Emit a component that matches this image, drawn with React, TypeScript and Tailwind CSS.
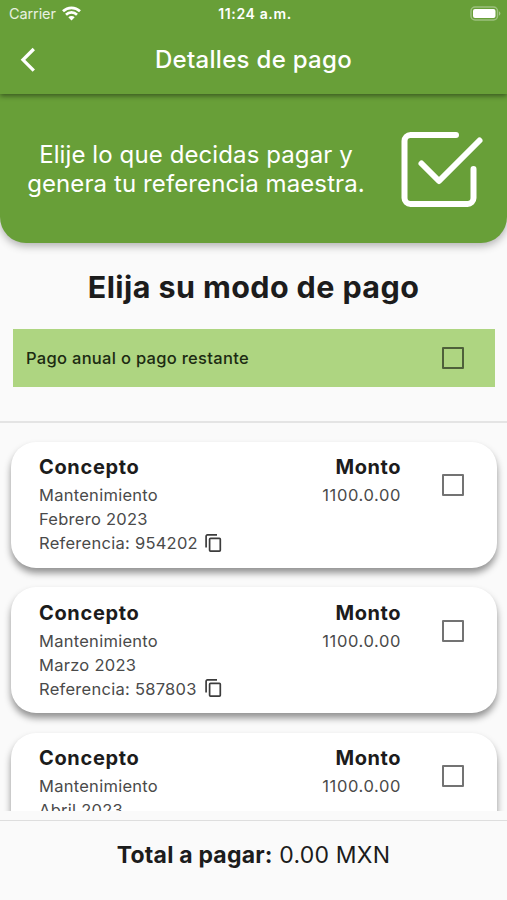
type Payment = {
  month: string;
  reference?: string;
  amount: string;
};

const payments: Payment[] = [
  { month: 'Febrero 2023', reference: '954202', amount: '1100.0.00' },
  { month: 'Marzo 2023', reference: '587803', amount: '1100.0.00' },
  { month: 'Abril 2023', amount: '1100.0.00' },
];

function StatusBar() {
  return (
    <div className="grid h-[27px] grid-cols-3 items-center pl-[9px] pr-[6px] text-[14.5px] leading-none text-white/85">
      <div className="flex items-center gap-[6px]">
        <span className="pt-px tracking-[-0.1px]">Carrier</span>
        <svg width="19" height="15" viewBox="0 0 19 15" fill="none" stroke="white" strokeWidth="2.7" aria-hidden>
          <path d="M1 5.3a12.2 12.2 0 0 1 17 0" />
          <path d="M4 8.7a7.9 7.9 0 0 1 11 0" />
          <path d="M9.5 14.5 6.3 11.3a4.5 4.5 0 0 1 6.4 0Z" fill="white" stroke="none" />
        </svg>
      </div>
      <span className="whitespace-nowrap pt-px text-center text-[14px] font-semibold tracking-[0.65px] text-white">
        11:24 a.m.
      </span>
      <svg className="ml-auto" width="31" height="15" viewBox="0 0 31 15" fill="none" aria-hidden>
        <rect x="1" y="1" width="26.5" height="13" rx="4" stroke="white" strokeOpacity="0.35" strokeWidth="1.5" />
        <rect x="3" y="3" width="22.5" height="9" rx="2" fill="white" />
        <path d="M29 5.2a2.6 2.6 0 0 1 0 4.6Z" fill="white" fillOpacity="0.4" />
      </svg>
    </div>
  );
}

function AppBar() {
  return (
    <header className="relative z-20 h-[94px] shrink-0 bg-[#689f38] shadow-[0_2px_5px_rgba(0,0,0,0.45)]">
      <StatusBar />
      <div className="grid h-[66px] grid-cols-[56px_1fr_56px] items-center">
        <svg className="ml-[19px]" width="18" height="26" viewBox="0 0 18 26" fill="none" stroke="white" strokeWidth="3.3" aria-hidden>
          <path d="M14.8 2 4 12.8l10.800 10.800" />
        </svg>
        <h1 className="text-center text-[24px] font-medium tracking-[0.3px] text-white">Detalles de pago</h1>
      </div>
    </header>
  );
}

function Banner() {
  return (
    <section className="relative z-10 flex h-[149px] shrink-0 items-center rounded-b-[26px] bg-[#689f38] pl-[20px] shadow-[0_3px_8px_rgba(0,0,0,0.3)]">
      <p className="w-[352px] pt-px text-center text-[24px] leading-[29.5px] tracking-[0.1px] text-white">
        Elije lo que decidas pagar y<br />
        genera tu referencia maestra.
      </p>
      <svg
        className="ml-[28px]"
        width="84"
        height="78"
        viewBox="0 0 84 78"
        fill="none"
        stroke="white"
        strokeWidth="6"
        strokeLinecap="round"
        strokeLinejoin="round"
        aria-hidden
      >
        <path d="M56 5H10.500a6 6 0 0 0-6 6V68a6 6 0 0 0 6 6h57a6 6 0 0 0 6-6V39" />
        <path d="M21.500 33.500 39 51 79.500 10.500" />
      </svg>
    </section>
  );
}

function Checkbox({ label, className = '' }: { label: string; className?: string }) {
  return (
    <span
      role="checkbox"
      aria-checked="false"
      aria-label={label}
      className={`block size-[22px] shrink-0 rounded-[1px] border-2 border-black/55 ${className}`}
    />
  );
}

function CopyIcon() {
  return (
    <svg width="17" height="19" viewBox="0 0 17 19" fill="none" stroke="#3c3c3c" strokeWidth="1.7" aria-hidden>
      <path d="M1.1 13.5V2.200a1.300 1.300 0 0 1 1.300-1.300H12" />
      <rect x="4.600" y="4.400" width="10.700" height="12.800" rx="0.900" />
    </svg>
  );
}

function PaymentCard({ month, reference, amount }: Payment) {
  return (
    <li className="flex h-[126px] shrink-0 rounded-[25px] bg-white pl-[28.5px] pr-[32.5px] pt-[12.5px] shadow-[0_5px_7px_rgba(0,0,0,0.42)]">
      <div className="flex-1 text-[16.5px] leading-[24px] tracking-[0.27px] text-[#4a4a4a]">
        <h3 className="mb-[2px] text-[20px] font-bold leading-[27px] tracking-[0.65px] text-[#1c1c1c]">Concepto</h3>
        <p>Mantenimiento</p>
        <p>{month}</p>
        {reference && (
          <p className="flex items-center">
            <span className="w-[165.5px]">Referencia: {reference}</span>
            <CopyIcon />
          </p>
        )}
      </div>
      <div className="mr-[41px] text-right text-[16.5px] leading-[24px] text-[#4a4a4a]">
        <h3 className="mb-[2px] text-[20px] font-bold leading-[27px] tracking-[0.55px] text-[#1c1c1c]">Monto</h3>
        <p className="tracking-[0.6px]">{amount}</p>
      </div>
      <Checkbox label={month} className="mt-[20px]" />
    </li>
  );
}

export default function App() {
  return (
    <div className="flex h-[900px] w-full flex-col overflow-hidden bg-[#fafafa] font-['Inter',sans-serif]">
      <AppBar />
      <Banner />

      <h2 className="mt-[23px] text-center text-[30.5px] font-bold leading-[42px] tracking-[0.4px] text-[#1c1c1c]">
        Elija su modo de pago
      </h2>

      <div className="ml-[13px] mr-[12px] mt-[21px] flex h-[58px] shrink-0 items-center justify-between bg-[#aed581] pl-[13px] pr-[31px]">
        <span className="text-[16.5px] font-medium tracking-[0.3px] text-[#1c2b12]">Pago anual o pago restante</span>
        <Checkbox label="Pago anual o pago restante" />
      </div>

      <hr className="mt-[34px] border-t-2 border-[#e4e4e4]" />

      <ul className="flex min-h-0 flex-1 flex-col gap-[19.5px] overflow-hidden px-[10.5px] pt-[18.5px]">
        {payments.map((payment) => (
          <PaymentCard key={payment.month} {...payment} />
        ))}
      </ul>

      <footer className="mt-[9px] h-[80px] shrink-0 border-t border-[#dedede] text-center text-[23px] leading-[68px] tracking-[0.2px] text-[#1c1c1c]">
        <span className="font-bold">Total a pagar:</span> 0.00 MXN
      </footer>
    </div>
  );
}
